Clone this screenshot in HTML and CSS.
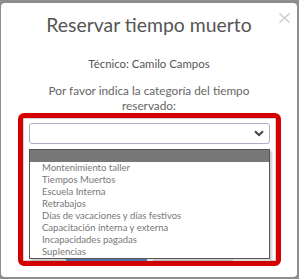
FILE: index.html
```html
<!DOCTYPE html>
<html lang="es">
<head>
	<meta charset="UTF-8">
	<meta name="viewport" content="width=device-width, initial-scale=1.0">
	<title> Reservar tiempo muerto </title>
	<link rel="stylesheet" href="styles.css">
</head>
<body>
	<div class="modal">
		<svg class="close" width="11" height="10" viewBox="0 0 11 10">
			<path d="M0.5 0.5 L10.5 9.5 M10.5 0.5 L0.5 9.5" stroke="#c8c8c8" stroke-width="1.3"/>
		</svg>
		<h1 class="title">Reservar tiempo muerto</h1>
		<p class="tech">Técnico: Camilo Campos</p>
		<p class="prompt">Por favor indica la categoría del tiempo reservado:</p>

		<div class="highlight">
			<div class="select">
				<svg class="chevron" width="10" height="7" viewBox="0 0 10 7">
					<path d="M1 1.2 L5 5 L9 1.2" fill="none" stroke="#444" stroke-width="2"/>
				</svg>
			</div>
			<ul class="options">
				<li class="selected"></li>
				<li>Montenimiento taller</li>
				<li>Tiempos Muertos</li>
				<li>Escuela Interna</li>
				<li>Retrabajos</li>
				<li>Días de vacaciones y días festivos</li>
				<li>Capacitación interna y externa</li>
				<li>Incapacidades pagadas</li>
				<li>Suplencias</li>
			</ul>
			<div class="peek">
				<span class="peek-blue"></span>
				<span class="peek-gap"></span>
				<span class="peek-red"></span>
				<span class="peek-gap2"></span>
			</div>
		</div>
	</div>
</body>
</html>
```

FILE: styles.css
```css
* {
	box-sizing: border-box;
}
html,
body {
	margin: 0;
	height: 279px;
	overflow: hidden;
	background: #8e8e8e;
	font-family: 'Lato', sans-serif;
}

.modal {
	position: relative;
	margin: 3px 2px 0 1px;
	height: 274px;
	background: #fff;
	border-radius: 4px;
	padding-top: 10px;
	text-align: center;
}

.close {
	position: absolute;
	top: 10px;
	right: 7px;
}

.title {
	margin: 0;
	font-size: 19.4px;
	line-height: 24px;
	font-weight: 400;
	color: #555;
}

.tech {
	margin: 19px 0 0;
	font-size: 11.4px;
	line-height: 16px;
	color: #555;
}

.prompt {
	margin: 11px auto 0;
	width: 215px;
	font-size: 11.8px;
	line-height: 15px;
	color: #666;
}

.highlight {
	margin: 0 16px 0 17px;
	height: 153px;
	border: 5px solid #d50000;
	border-radius: 6px;
	padding: 5px 6px 0;
	box-shadow: inset 0 0 0 1px #d4d4d4;
	text-align: left;
}

.select {
	height: 21px;
	border: 1px solid #a9b0c6;
	border-radius: 3px;
	display: flex;
	align-items: center;
	justify-content: flex-end;
	padding-right: 5px;
}

.options {
	list-style: none;
	margin: 5px 0 0;
	padding: 0;
	height: 110px;
	border: 1px solid #555;
	box-shadow: 2px 2px 2px rgba(0, 0, 0, .2);
	font-size: 9.5px;
	line-height: 12px;
	color: #777;
}

.options li {
	height: 12px;
	padding-left: 12px;
	white-space: nowrap;
}

.options .selected {
	background: #787878;
}

.peek {
	display: flex;
	height: 2px;
}

.peek-blue {
	margin-left: 37px;
	width: 81px;
	background: #5573ad;
}

.peek-gap {
	width: 6px;
	background: #ddd;
}

.peek-red {
	width: 80px;
}

.peek-gap2 {
	width: 37px;
	background: #ddd;
}
```
